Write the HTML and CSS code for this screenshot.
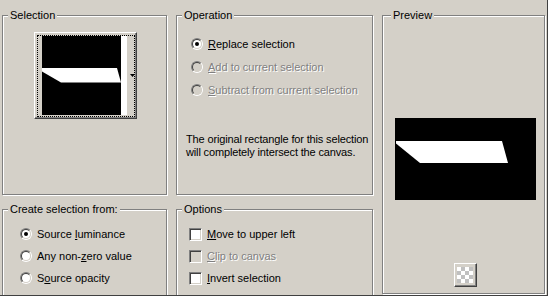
FILE: index.html
```html
<!DOCTYPE html>
<html lang="en">
<head>
  <meta charset="UTF-8" />
  <title>Selection from mask</title>
  <link rel="stylesheet" href="styles.css">
</head>
<body>
  <div class="window">
    <div class="dialog">

      <!-- Selection -->
      <div class="group selection">
        <span class="caption">Selection</span>
        <div class="picker">
          <div class="picker-focus">
            <svg class="thumb" width="85" height="79" viewBox="0 0 85 79">
              <rect x="0" y="0" width="79" height="79" fill="#000" />
              <rect x="79" y="0" width="6" height="79" fill="#fff" />
              <polygon points="0,32 75,32 79,46.5 19,46.5 0,35.5" fill="#fff" />
            </svg>
            <svg class="arrow" width="5" height="3" viewBox="0 0 5 3">
              <polygon points="0,0 5,0 2.5,3" fill="#000" />
            </svg>
          </div>
        </div>
      </div>

      <!-- Operation -->
      <div class="group operation">
        <span class="caption">Operation</span>
        <div class="list op-list">
          <div class="row"><span class="radio"><span class="radio-in checked"></span></span><span><u>R</u>eplace selection</span></div>
          <div class="row disabled"><span class="radio"><span class="radio-in"></span></span><span><u>A</u>dd to current selection</span></div>
          <div class="row disabled"><span class="radio"><span class="radio-in"></span></span><span><u>S</u>ubtract from current selection</span></div>
        </div>
        <p class="note">The original rectangle for this selection<br>will completely intersect the canvas.</p>
      </div>

      <!-- Preview -->
      <div class="group preview">
        <span class="caption">Preview</span>
        <svg class="preview-img" width="141" height="82" viewBox="0 0 141 82">
          <rect x="0" y="0" width="141" height="82" fill="#000" />
          <polygon points="1,23 107,23 113,45 25,45 1,25.5" fill="#fff" />
        </svg>
        <div class="tool-btn">
          <svg width="16" height="16" viewBox="0 0 16 16">
            <rect x="0" y="0" width="16" height="16" fill="#fff" />
            <rect x="4" y="0" width="4" height="4" fill="#c0c0c0" />
            <rect x="12" y="0" width="4" height="4" fill="#c0c0c0" />
            <rect x="0" y="4" width="4" height="4" fill="#c0c0c0" />
            <rect x="8" y="4" width="4" height="4" fill="#c0c0c0" />
            <rect x="4" y="8" width="4" height="4" fill="#c0c0c0" />
            <rect x="12" y="8" width="4" height="4" fill="#c0c0c0" />
            <rect x="0" y="12" width="4" height="4" fill="#c0c0c0" />
            <rect x="8" y="12" width="4" height="4" fill="#c0c0c0" />
          </svg>
        </div>
      </div>

      <!-- Create selection from -->
      <div class="group source">
        <span class="caption">Create selection from:</span>
        <div class="list src-list">
          <div class="row"><span class="radio"><span class="radio-in checked"></span></span><span>Source <u>l</u>uminance</span></div>
          <div class="row"><span class="radio"><span class="radio-in"></span></span><span>Any non-<u>z</u>ero value</span></div>
          <div class="row"><span class="radio"><span class="radio-in"></span></span><span>S<u>o</u>urce opacity</span></div>
        </div>
      </div>

      <!-- Options -->
      <div class="group options">
        <span class="caption">Options</span>
        <div class="list opt-list">
          <div class="row"><span class="check"></span><span><u>M</u>ove to upper left</span></div>
          <div class="row disabled"><span class="check"></span><span><u>C</u>lip to canvas</span></div>
          <div class="row"><span class="check"></span><span><u>I</u>nvert selection</span></div>
        </div>
      </div>

    </div>
  </div>
</body>
</html>
```

FILE: styles.css
```css
body {
  margin: 0;
  font-family: "Liberation Sans", Arial, sans-serif;
  font-size: 11px;
  color: #000;
}

.window {
  width: 548px;
  height: 296px;
  box-sizing: border-box;
  background-color: #d4d0c8;
  border-right: 1px solid #404040;
  border-bottom: 1px solid #404040;
  overflow: hidden;
}

.dialog {
  display: grid;
  grid-template-columns: 165px 197px 163px;
  grid-template-rows: 180px 120px;
  column-gap: 9px;
  row-gap: 14px;
  padding: 15px 0 0 2px;
}

.group {
  border: 1px solid #808080;
  box-shadow: inset 1px 1px #fff, 1px 1px #fff;
}

.caption {
  display: block;
  align-self: flex-start;
  width: max-content;
  margin: -7px 0 -6px 5px;
  padding: 0 2px;
  line-height: 13px;
  background-color: #d4d0c8;
}

/* selection picker */
.selection {
  display: flex;
  flex-direction: column;
  align-items: center;
}

.picker {
  flex: none;
  margin-top: 16px;
  margin-left: 2px;
  width: 103px;
  height: 87px;
  box-sizing: border-box;
  padding: 2px 1px 1px 2px;
  border: 1px solid;
  border-color: #fff #404040 #404040 #fff;
  box-shadow: inset -1px -1px #808080;
}

.picker-focus {
  height: 82px;
  box-sizing: border-box;
  border: 1px dotted #000;
  display: flex;
  align-items: flex-start;
}

.thumb {
  display: block;
  flex: none;
  margin-left: 4px;
}

.arrow {
  display: block;
  flex: none;
  margin: 38px 0 0 3px;
}

/* radio + checkbox lists */
.row {
  display: flex;
  align-items: center;
  height: 23px;
  white-space: nowrap;
}

.op-list {
  padding: 16px 0 0 14px;
}

.src-list {
  padding: 13px 0 0 17px;
}

.src-list .row,
.opt-list .row {
  height: 22px;
}

.opt-list {
  padding: 13px 0 0 12px;
}

.radio {
  flex: none;
  width: 12px;
  height: 12px;
  box-sizing: border-box;
  margin-right: 5px;
  border-radius: 50%;
  border: 1px solid;
  border-color: #808080 #fff #fff #808080;
  display: flex;
}

.radio-in {
  width: 10px;
  height: 10px;
  box-sizing: border-box;
  border-radius: 50%;
  border: 1px solid;
  border-color: #404040 #d4d0c8 #d4d0c8 #404040;
  background-color: #fff;
  display: flex;
  align-items: center;
  justify-content: center;
}

.radio-in.checked::after {
  content: "";
  width: 4px;
  height: 4px;
  border-radius: 50%;
  background-color: #000;
}

.check {
  flex: none;
  width: 13px;
  height: 13px;
  box-sizing: border-box;
  margin-right: 5px;
  border: 1px solid;
  border-color: #808080 #fff #fff #808080;
  box-shadow: inset 1px 1px #404040, inset -1px -1px #d4d0c8;
  background-color: #fff;
}

.disabled {
  color: #808080;
  text-shadow: 1px 1px #fff;
}

.disabled .radio-in,
.disabled .check {
  background-color: #d4d0c8;
}

.note {
  margin: 32px 0 0 9px;
  line-height: 13px;
  letter-spacing: -0.15px;
  white-space: nowrap;
}

/* preview */
.preview {
  grid-row: span 2;
  align-self: start;
  height: 279px;
  box-sizing: border-box;
  display: flex;
  flex-direction: column;
  align-items: center;
  padding-left: 3px;
}

.preview-img {
  display: block;
  flex: none;
  margin-top: 102px;
}

.tool-btn {
  flex: none;
  margin-top: 63px;
  width: 23px;
  height: 24px;
  box-sizing: border-box;
  border: 1px solid;
  border-color: #fff #404040 #404040 #fff;
  box-shadow: inset -1px -1px #808080;
  display: flex;
  align-items: center;
  justify-content: center;
}

.tool-btn svg {
  display: block;
}
```
